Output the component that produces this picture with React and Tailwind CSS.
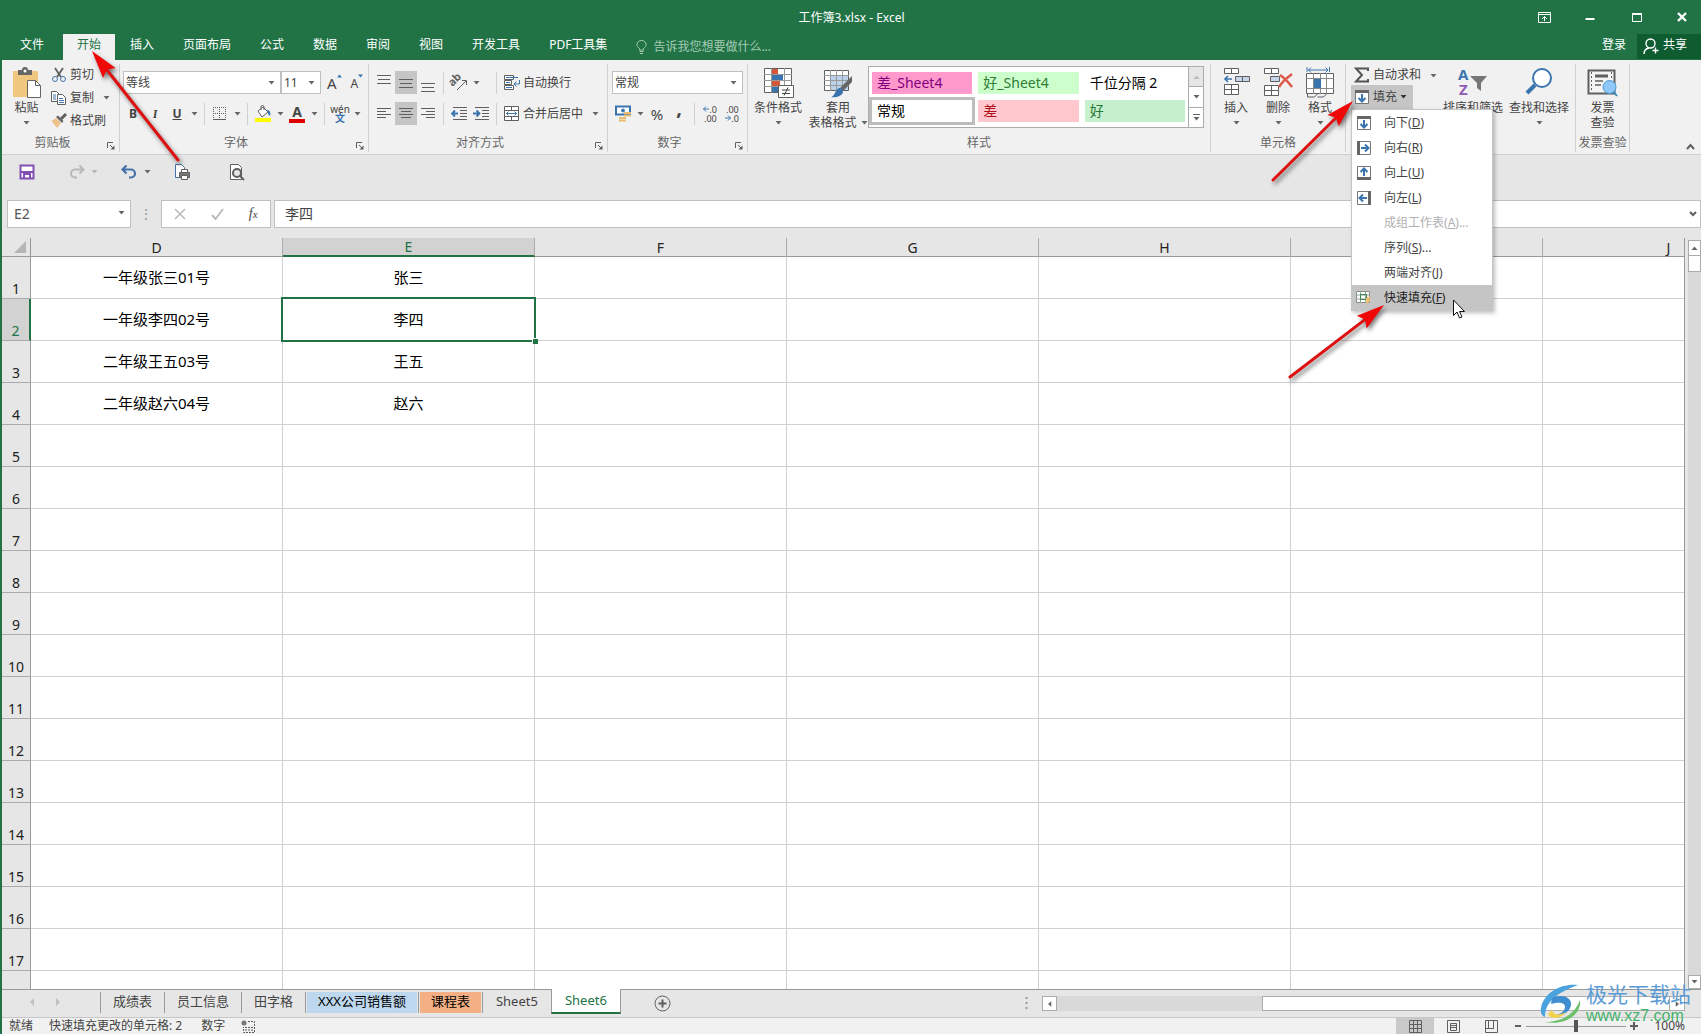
import { useState } from 'react'

const menuTabs = ['开始', '插入', '页面布局', '公式', '数据', '审阅', '视图', '开发工具', 'PDF工具集']

const columns = ['D', 'E', 'F', 'G', 'H', 'I', 'J']

const cells = {
  D1: '一年级张三01号',
  D2: '一年级李四02号',
  D3: '二年级王五03号',
  D4: '二年级赵六04号',
  E1: '张三',
  E2: '李四',
  E3: '王五',
  E4: '赵六',
}

const rows = Array.from({ length: 17 }, (_, i) => i + 1)

const styleCells = [
  { name: '差_Sheet4', className: 'bg-[#ff99cc] text-[#800080]' },
  { name: '好_Sheet4', className: 'bg-[#ccffcc] text-[#2f7d32]' },
  { name: '千位分隔 2', className: 'bg-white text-black' },
  { name: '常规', className: 'bg-white text-black outline-3 outline-[#bdbdbd]' },
  { name: '差', className: 'bg-[#ffc7ce] text-[#b0101c]' },
  { name: '好', className: 'bg-[#c6efce] text-[#2a7a35]' },
]

const fillItems = [
  { label: '向下', hotkey: 'D', icon: 'down' },
  { label: '向右', hotkey: 'R', icon: 'right' },
  { label: '向上', hotkey: 'U', icon: 'up' },
  { label: '向左', hotkey: 'L', icon: 'left' },
  { label: '成组工作表', hotkey: 'A', more: '...', disabled: true },
  { label: '序列', hotkey: 'S', more: '...' },
  { label: '两端对齐', hotkey: 'J' },
  { label: '快速填充', hotkey: 'F', icon: 'flash', active: true },
]

function Caret({ className = 'text-[#666]' }) {
  return (
    <svg className={`w-[7px] h-1 shrink-0 ${className}`} viewBox="0 0 7 4" fill="currentColor">
      <path d="M0.5 0h6L3.5 3.5z" />
    </svg>
  )
}

function Icon({ children, w = 16, h = 16, className = '' }) {
  return (
    <svg className={`shrink-0 overflow-visible ${className}`} width={w} height={h} viewBox={`0 0 ${w} ${h}`} fill="none" stroke="#5f5f5f">
      {children}
    </svg>
  )
}

function Sep() {
  return <span className="w-px h-[22px] mx-1 bg-[#d0d0d0]" />
}

function Tool({ label, active, children }) {
  return (
    <button aria-label={label} className={`w-[22px] h-[23px] flex items-center justify-center ${active ? 'bg-[#c5c5c5]' : ''}`}>
      {children}
    </button>
  )
}

function Drop({ label }) {
  return (
    <button aria-label={label} className="w-3 h-[23px] flex items-center justify-center">
      <Caret />
    </button>
  )
}

function Group({ title, width, launcher, children }) {
  return (
    <section className={`relative shrink-0 flex flex-col border-r border-[#d0d0d0] ${width}`}>
      <div className="h-[70px] flex">{children}</div>
      <h2 className={`h-[18px] text-center leading-[18px] text-[#666] ${launcher ? 'pr-4' : ''}`}>{title}</h2>
      {launcher && (
        <button aria-label={`${title}设置`} className="absolute right-1 bottom-0.5">
          <Icon w={8} h={8}>
            <path d="M0.5 6V0.5H6M3 3l3.5 3.5" />
            <path d="M7.5 3.5v4h-4z" fill="#5f5f5f" stroke="none" />
          </Icon>
        </button>
      )}
    </section>
  )
}

function BigButton({ icon, lines, width, caret }) {
  return (
    <button className={`flex flex-col items-center shrink-0 whitespace-nowrap leading-[15px] pt-1 ${width}`}>
      <span className="h-8 flex items-start">{icon}</span>
      {lines.map((l, i) => (
        <span key={l} className="flex items-center gap-1">
          {l}
          {caret && i > 0 && <Caret />}
        </span>
      ))}
      {caret && lines.length === 1 && <Caret className="mt-1.5 text-[#666]" />}
    </button>
  )
}

function Combo({ label, value, width }) {
  return (
    <div className={`relative h-[23px] shrink-0 ${width}`}>
      <select aria-label={label} defaultValue={value} className="appearance-none w-full h-full bg-white border border-[#c0c0c0] pl-0.5 outline-none text-[#444]">
        <option>{value}</option>
      </select>
      <Caret className="absolute right-1.5 top-[10px] pointer-events-none text-[#666]" />
    </div>
  )
}

function Lines({ rows }) {
  return (
    <Icon w={14} h={16}>
      {rows.map(([y, x, w]) => <path key={y} d={`M${x} ${y}.5h${w}`} />)}
    </Icon>
  )
}

// Small sheet icon with an arrow, one for each fill direction
function FillIcon({ dir }) {
  if (dir === 'flash') {
    return (
      <Icon>
        <path d="M0.5 1.5h13v11H0.5z" fill="#fff" stroke="#8a8a8a" />
        <path d="M0 5h14M0 9h14M4.5 1v12M9.5 1v12" stroke="#8aa890" />
        <path d="M4.5 4.5h6v5h-6z" stroke="#3c8257" />
        <path d="M11 7h4l-2 3h2l-5 5 1-4h-2z" fill="#f0c070" stroke="none" />
      </Icon>
    )
  }
  const turn = { down: 0, left: 90, up: 180, right: 270 }[dir]
  return (
    <Icon>
      <g transform={`rotate(${turn} 8 8)`}>
        <path d="M1.5 1.5h13v13h-13z" fill="#fff" stroke="#777" />
        <path d="M1 1h14v3H1z" fill="#666" stroke="none" />
        <path d="M8 5v7M4.5 9L8 12.5 11.5 9" stroke="#3a74ae" strokeWidth="2" />
      </g>
    </Icon>
  )
}

function FillMenu() {
  return (
    <ul role="menu" className="absolute z-20 left-0 top-6 w-[142px] bg-white border border-[#c6c6c6] shadow-[2px_2px_4px_rgba(0,0,0,0.25)]">
      {fillItems.map((item) => (
        <li key={item.hotkey} role="none">
          <button
            role="menuitem"
            disabled={item.disabled}
            className={`w-full h-[25px] flex items-center text-left pl-1 ${item.active ? 'bg-[#c5c5c5] text-[#222]' : ''} ${item.disabled ? 'text-[#b0b0b0]' : ''}`}
          >
            <span className="w-7 shrink-0">{item.icon && <FillIcon dir={item.icon} />}</span>
            <span>{item.label}(<u>{item.hotkey}</u>){item.more}</span>
          </button>
        </li>
      ))}
    </ul>
  )
}

function TitleBar() {
  return (
    <header className="h-[34px] shrink-0 flex items-center text-white">
      <div className="flex-1 pl-3.5" />
      <h1 className="pt-0.5">工作簿3.xlsx - Excel</h1>
      <div className="flex-1 flex justify-end items-center gap-[33px] pr-3.5">
        <button aria-label="功能区显示选项">
          <Icon w={13} h={11}>
            <g stroke="#fff"><path d="M0.5 0.5h12v10H0.5zM0 2.5h13M6.5 9V4.5M4 7l2.5-2.5L9 7" /></g>
          </Icon>
        </button>
        <button aria-label="最小化" className="pl-px">
          <Icon w={10} h={10}><path d="M0.5 7h9" stroke="#fff" strokeWidth="2" /></Icon>
        </button>
        <button aria-label="最大化" className="pl-1">
          <Icon w={10} h={10}><path d="M0.5 1v8.5h9V1M0 1.5h10" stroke="#fff" /><path d="M0 1h10v2H0z" fill="#fff" stroke="none" /></Icon>
        </button>
        <button aria-label="关闭" className="pl-0.5">
          <Icon w={10} h={10}><path d="M1 1l8 8M9 1L1 9" stroke="#fff" strokeWidth="2.4" /></Icon>
        </button>
      </div>
    </header>
  )
}

function MenuTabs() {
  const [current, setCurrent] = useState('开始')
  return (
    <nav className="h-[26px] shrink-0 flex items-stretch gap-px text-white">
      <button className="w-[60px] pb-1 leading-[22px]">文件</button>
      {menuTabs.map((t) => (
        <button
          key={t}
          onClick={() => setCurrent(t)}
          className={`px-3.5 pb-1 leading-[22px] whitespace-nowrap ${current === t ? 'bg-[#f1f1f1] text-[#217346]' : ''}`}
        >
          {t}
        </button>
      ))}
      <label className="flex items-center gap-1.5 pl-3.5 pb-1 pt-1">
        <Icon w={11} h={14}>
          <path d="M3.5 10V8.5C1.5 7 1 6 1 4.500a4.500 4 0 0 1 9 0C10 6 9.500 7 7.500 8.500V10zM3.500 11.500h4M4 13.500h3" stroke="#a3cbb3" />
        </Icon>
        <input aria-label="告诉我您想要做什么" placeholder="告诉我您想要做什么..." className="w-40 bg-transparent outline-none placeholder:text-[#a3cbb3]" />
      </label>
      <div className="flex-1" />
      <button className="px-2.5 pb-1 leading-[22px]">登录</button>
      <button className="w-16 h-[25px] bg-[#0e5c2f] flex items-center gap-1 pl-1.5 leading-4">
        <Icon w={16} h={17}>
          <g stroke="#fff" strokeWidth="1.4">
            <circle cx="7.500" cy="5.500" r="4.500" />
            <path d="M1 16c0-4 2.500-5.500 5-6M12.500 9.500v6M9.500 12.500h6" />
          </g>
        </Icon>
        <span className="pb-1">共享</span>
      </button>
    </nav>
  )
}

function ClipboardGroup() {
  return (
    <Group title="剪贴板" width="w-[118px]" launcher>
      <BigButton
        lines={['粘贴']}
        width="w-[49px]"
        caret
        icon={
          <Icon w={30} h={31}>
            <path d="M1 3h25v26H1z" fill="#efc77e" stroke="none" />
            <path d="M6 2h4a3 3 0 0 1 6 0h4v5H6z" fill="#666" stroke="none" />
            <circle cx="13" cy="3" r="1.500" fill="#fff" stroke="none" />
            <path d="M15.500 12.500h8l5 5v12h-13z" fill="#fff" stroke="#666" />
            <path d="M23.500 12.500v5h5" />
          </Icon>
        }
      />
      <div className="flex flex-col">
        <button className="h-[22px] flex items-center gap-[3px]">
          <Icon>
            <path d="M4 1l6 9M12 1L6 10" strokeWidth="1.800" />
            <circle cx="4" cy="12" r="2.500" stroke="#4472a8" />
            <circle cx="12" cy="12" r="2.500" stroke="#4472a8" />
          </Icon>
          剪切
        </button>
        <div className="flex items-center">
          <button className="h-[23px] flex items-center gap-[3px]">
            <Icon>
              <path d="M0.500 1.500h5l3 3v7h-8z" fill="#fff" />
              <path d="M2 5h3M2 7h3M2 9h3" stroke="#4472a8" />
              <path d="M6.500 4.500h5l3 3v7h-8z" fill="#fff" />
              <path d="M8 8.500h4M8 10.500h5M8 12.500h5" stroke="#4472a8" />
            </Icon>
            复制
          </button>
          <span className="pl-1.5 flex"><Drop label="复制选项" /></span>
        </div>
        <button className="h-[23px] flex items-center gap-[3px]">
          <Icon>
            <path d="M0.500 8L5 5l5 5-4 5z" fill="#efc28a" stroke="none" />
            <path d="M5 4l2-1.500L12.500 8 11 10z" fill="#666" stroke="none" />
            <path d="M10 6l5-5" strokeWidth="3" />
          </Icon>
          格式刷
        </button>
      </div>
    </Group>
  )
}

function FontGroup() {
  return (
    <Group title="字体" width="w-[249px]" launcher>
      <div className="flex flex-col gap-2 pt-[7px]">
        <div className="flex items-center pl-[3px]">
          <Combo label="字体" value="等线" width="w-[158px]" />
          <Combo label="字号" value="11" width="w-[40px]" />
          <button aria-label="增大字号" className="pl-1.5 flex text-[15px] leading-5">
            A<Icon w={6} h={5} className="mt-px"><path d="M0 3.500h5L2.500 0.500z" fill="#3a74ae" stroke="none" /></Icon>
          </button>
          <button aria-label="减小字号" className="pl-2 pt-0.5 flex text-xs leading-5">
            A<Icon w={6} h={5}><path d="M0 0.500h5L2.500 3.500z" fill="#3a74ae" stroke="none" /></Icon>
          </button>
        </div>
        <div className="flex items-center pl-0.5">
          <Tool label="加粗"><b>B</b></Tool>
          <Tool label="倾斜"><i className="font-serif font-bold">I</i></Tool>
          <Tool label="下划线"><u className="font-bold">U</u></Tool>
          <Drop label="下划线选项" />
          <Sep />
          <Tool label="边框">
            <Icon w={14} h={14}>
              <path d="M0.500 0v13M6.500 0v13M12.500 0v13M0 0.500h13M0 6.500h13" strokeDasharray="1 1" />
              <path d="M0 12.500h13" />
            </Icon>
          </Tool>
          <Drop label="边框选项" />
          <Sep />
          <Tool label="填充颜色">
            <Icon w={16} h={17}>
              <path d="M3 6l5-4 5 5-6 5z" fill="#fff" />
              <path d="M6 5V2a1.500 1.500 0 0 1 3 0v3" />
              <path d="M12 5c3 0 4 3 3 6-2-1-2-3-3-6z" fill="#3a74ae" stroke="none" />
              <path d="M0 13h16v4H0z" fill="#ffff00" stroke="none" />
            </Icon>
          </Tool>
          <Drop label="填充颜色选项" />
          <Tool label="字体颜色">
            <span className="w-4 border-b-4 border-[#e00000] text-sm leading-[14px] font-bold">A</span>
          </Tool>
          <Drop label="字体颜色选项" />
          <Sep />
          <Tool label="拼音">
            <span className="flex flex-col items-center text-[10px] leading-[9px]">
              wén<span className="text-[#3a74ae] font-bold">文</span>
            </span>
          </Tool>
          <Drop label="拼音选项" />
        </div>
      </div>
    </Group>
  )
}

function AlignGroup() {
  return (
    <Group title="对齐方式" width="w-[239px]" launcher>
      <div className="flex flex-col gap-2 pt-[7px] pl-1">
        <div className="flex items-center">
          <Tool label="顶端对齐"><Lines rows={[[0, 0, 14], [4, 1, 12], [8, 0, 14]]} /></Tool>
          <Tool label="垂直居中" active><Lines rows={[[4, 0, 14], [8, 1, 12], [12, 0, 14]]} /></Tool>
          <Tool label="底端对齐"><Lines rows={[[8, 0, 14], [12, 1, 12], [16, 0, 14]]} /></Tool>
          <Sep />
          <div className="w-11 flex">
            <Tool label="方向">
              <Icon w={17} h={17}>
                <text x="-1" y="9" transform="rotate(-45 5 8)" fontSize="11" fontWeight="bold" fill="#5f5f5f" stroke="none">ab</text>
                <path d="M6 16l9-9M11 6.500h4.500V11" />
              </Icon>
            </Tool>
            <Drop label="方向选项" />
          </div>
          <Sep />
          <button className="h-[23px] flex items-center gap-[3px] pl-[3px]">
            <Icon>
              <path d="M0.500 0.500h9v4h-9zM0.500 5.500h7v4h-7zM0.500 10.500h9v4h-9z" fill="#fff" />
              <path d="M2 2.500h12M2 7.500h4M2 12.500h6M15.500 5v4h-5M12.500 6.500l-2.500 2.500 2.500 2.500" stroke="#3a74ae" />
            </Icon>
            自动换行
          </button>
        </div>
        <div className="flex items-center">
          <Tool label="左对齐"><Lines rows={[[2, 0, 14], [5, 0, 9], [8, 0, 14], [11, 0, 9]]} /></Tool>
          <Tool label="居中" active><Lines rows={[[2, 0, 14], [5, 2, 10], [8, 0, 14], [11, 2, 10]]} /></Tool>
          <Tool label="右对齐"><Lines rows={[[2, 0, 14], [5, 5, 9], [8, 0, 14], [11, 5, 9]]} /></Tool>
          <Sep />
          <Tool label="减少缩进量">
            <Icon><path d="M2 1.500h14M9 4.500h7M9 7.500h7M9 10.500h7M2 13.500h14" /><path d="M1 7.500h6M4 4.500l-3 3 3 3" stroke="#3a74ae" strokeWidth="1.800" /></Icon>
          </Tool>
          <Tool label="增加缩进量">
            <Icon><path d="M2 1.500h14M9 4.500h7M9 7.500h7M9 10.500h7M2 13.500h14" /><path d="M0 7.500h6M3.500 4.500l3 3-3 3" stroke="#3a74ae" strokeWidth="1.800" /></Icon>
          </Tool>
          <Sep />
          <button className="h-[23px] flex items-center gap-[3px] pl-[3px]">
            <Icon>
              <path d="M0.500 0.500h14v14H0.500zM0 4.500h15M0 10.500h15M7.500 0v4M7.500 11v4" fill="#fff" />
              <path d="M2.500 7.500h10M4.500 5.500l-2 2 2 2M10.500 5.500l2 2-2 2" stroke="#3a74ae" />
            </Icon>
            合并后居中
          </button>
          <span className="pl-1.5 flex"><Drop label="合并选项" /></span>
        </div>
      </div>
    </Group>
  )
}

function NumberGroup() {
  return (
    <Group title="数字" width="w-[140px]" launcher>
      <div className="flex flex-col gap-2 pt-[7px] pl-1">
        <Combo label="数字格式" value="常规" width="w-[131px]" />
        <div className="flex items-center">
          <Tool label="会计数字格式">
            <Icon w={17} h={17}>
              <path d="M1 1.500h14v8H1z" fill="#fff" stroke="#3a74ae" strokeWidth="2" />
              <circle cx="8" cy="5.500" r="1.500" fill="#3a74ae" stroke="#3a74ae" />
              <path d="M9 8h7M9 10.500h7M4 13h7M4 15.500h7" stroke="#e8bd72" strokeWidth="2" />
            </Icon>
          </Tool>
          <Drop label="会计格式选项" />
          <Tool label="百分比"><span className="text-[15px]">%</span></Tool>
          <Tool label="千位分隔"><span className="text-xl leading-4 pb-3 font-bold">,</span></Tool>
          <Sep />
          <Tool label="增加小数位数">
            <span className="flex flex-col text-[9px] leading-[9px] text-right">
              <span className="flex items-center"><Icon w={6} h={6}><path d="M0.500 3H6M3 0.500L0.500 3 3 5.500" stroke="#3a74ae" /></Icon>.0</span>
              <span>.00</span>
            </span>
          </Tool>
          <Tool label="减少小数位数">
            <span className="flex flex-col text-[9px] leading-[9px] text-right">
              <span>.00</span>
              <span className="flex items-center"><Icon w={6} h={6}><path d="M0 3h5.500M3 0.500L5.500 3 3 5.500" stroke="#3a74ae" /></Icon>.0</span>
            </span>
          </Tool>
        </div>
      </div>
    </Group>
  )
}

function StylesGroup() {
  return (
    <Group title="样式" width="w-[463px]">
      <BigButton
        lines={['条件格式']}
        width="w-[60px]"
        caret
        icon={
          <Icon w={31} h={31}>
            <path d="M1.500 0.500h27v24h-27z" fill="#fff" />
            <path d="M9 1h6v5H9zM9 13h8v5H9z" fill="#d6583c" stroke="none" />
            <path d="M9 7h11v5H9zM9 19h6v5H9z" fill="#3a74ae" stroke="none" />
            <path d="M1 6.500h28M1 12.500h28M1 18.500h28M8.500 0v25M21.500 0v25" stroke="#999" />
            <path d="M15.500 17.500h15v12h-15z" fill="#fff" />
            <path d="M19 22h8M19 25.500h8M25 19.500l-4 8" stroke="#444" />
          </Icon>
        }
      />
      <BigButton
        lines={['套用', '表格格式']}
        width="w-[60px]"
        caret
        icon={
          <Icon w={30} h={31}>
            <path d="M1.500 2.500h24v20h-24z" fill="#fff" />
            <path d="M7 8h18v14H7z" fill="#bcd2ea" stroke="none" />
            <path d="M1 7.500h25M1 12.500h25M1 17.500h25M7.500 2v21M13.500 2v21M19.500 2v21" stroke="#999" />
            <path d="M29 8v6l-9 9-3-3z" fill="#666" stroke="none" />
            <path d="M16 20c3 0 4 2 4 5-3 4-8 5-12 4 4-1 4-7 8-9z" fill="#3a74ae" stroke="none" />
          </Icon>
        }
      />
      <div className="mt-0.5 h-[62px] border border-[#ababab] bg-white flex">
        <div className="grid grid-cols-3 gap-1.5 w-[319px] px-[3px] py-[5px]">
          {styleCells.map((s) => (
            <button key={s.name} className={`text-left text-sm pl-[5px] leading-[20px] ${s.className}`}>
              {s.name}
            </button>
          ))}
        </div>
        <div className="w-[15px] flex flex-col border-l border-[#ababab] divide-y divide-[#ababab]">
          <button aria-label="上一行" className="flex-1 bg-[#e6e6e6] flex items-center justify-center"><Caret className="rotate-180 text-[#bbb]" /></button>
          <button aria-label="下一行" className="flex-1 flex items-center justify-center"><Caret /></button>
          <button aria-label="其他样式" className="flex-1 flex flex-col gap-0.5 items-center justify-center">
            <span className="w-[7px] h-px bg-[#666]" />
            <Caret />
          </button>
        </div>
      </div>
    </Group>
  )
}

function CellsGroup() {
  return (
    <Group title="单元格" width="w-[135px]">
      <span className="w-1" />
      <BigButton
        lines={['插入']}
        width="w-[42px]"
        caret
        icon={
          <Icon w={27} h={28}>
            <path d="M1.500 0.500h14v5h-14zM8.500 0v6M1.500 16.500h14v10h-14zM1 21.500h15M8.500 16v11" fill="#fff" />
            <path d="M12.500 8.500h14v5h-14zM19.500 8v6" fill="#c5d6ea" />
            <path d="M2 11h7M5 8l-3 3 3 3" stroke="#3a74ae" strokeWidth="1.600" />
          </Icon>
        }
      />
      <BigButton
        lines={['删除']}
        width="w-[42px]"
        caret
        icon={
          <Icon w={29} h={28}>
            <path d="M0.500 0.500h14v5h-14zM7.500 0v6M0.500 17.500h14v10h-14zM0 22.500h15M7.500 17v11" fill="#fff" />
            <path d="M6.500 8.500h9v5h-9z" fill="#c5d6ea" />
            <path d="M16 7c3 2 9 8 12 12M28 6C24 9 18 14 15 19" stroke="#dc5a4a" strokeWidth="2.500" />
          </Icon>
        }
      />
      <BigButton
        lines={['格式']}
        width="w-[42px]"
        caret
        icon={
          <Icon w={28} h={31}>
            <path d="M1 -1v5M23.500 -1v5M2 2h20M5 -0.500L2.500 2 5 4.500M19.500 -0.500L22 2l-2.500 2.500" stroke="#3a74ae" />
            <path d="M0.500 5.500h27v20h-27z" fill="#fff" />
            <path d="M0 10.500h28M0 20.500h28M7.500 5v21M14.500 5v5M14.500 21v5M20.500 5v21" stroke="#888" />
            <path d="M8 11h7v9H8z" fill="#3a74ae" stroke="none" />
            <path d="M1.500 26v3h7l3-3M11.500 29h6l3-3" />
          </Icon>
        }
      />
    </Group>
  )
}

function EditGroup() {
  return (
    <Group title="" width="w-[230px]">
      <div className="w-[92px] shrink-0 pl-[5px]">
        <div className="flex items-center">
          <button className="h-[21px] flex items-center gap-[3px] pl-[3px] whitespace-nowrap">
            <Icon><path d="M14 4V1.500H2L8 8l-6 6.500h12V12" stroke="#555" strokeWidth="2" /></Icon>
            自动求和
          </button>
          <span className="pl-1.5 flex h-[21px]"><Drop label="求和选项" /></span>
        </div>
        <div className="relative w-[62px]">
          <button aria-expanded="true" className="w-full h-6 bg-[#c5c5c5] flex items-center gap-[3px] pl-[3px]">
            <FillIcon dir="down" />
            填充
            <Caret className="text-[#333]" />
          </button>
          <FillMenu />
        </div>
      </div>
      <BigButton
        lines={['排序和筛选']}
        width="w-[70px]"
        icon={
          <Icon w={30} h={30}>
            <text x="0" y="12" fontSize="15" fontWeight="bold" fill="#3a74ae" stroke="none">A</text>
            <text x="1" y="27" fontSize="15" fontWeight="bold" fill="#8f5bb5" stroke="none">Z</text>
            <path d="M12 8h17l-6 7v8l-4-3v-5z" fill="#777" stroke="none" />
          </Icon>
        }
      />
      <BigButton
        lines={['查找和选择']}
        width="w-[62px]"
        caret
        icon={
          <Icon w={28} h={28}>
            <path d="M10 17l-8 8" stroke="#3a74ae" strokeWidth="4" />
            <circle cx="17" cy="10" r="9" fill="#fff" stroke="#3a74ae" strokeWidth="2" />
          </Icon>
        }
      />
    </Group>
  )
}

function InvoiceGroup() {
  return (
    <Group title="发票查验" width="w-[54px]">
      <BigButton
        lines={['发票', '查验']}
        width="w-[53px]"
        icon={
          <Icon w={31} h={29}>
            <path d="M1.500 2.500h26v23h-26z" fill="#f4f4f4" strokeWidth="2" />
            <path d="M4.500 4v20M24.500 4v8" strokeDasharray="2 2" />
            <path d="M8 8h13" strokeWidth="3" />
            <path d="M8 13h8M8 17h6" strokeWidth="1.600" />
            <path d="M26 23l4 5" stroke="#3a8ac0" strokeWidth="2" />
            <circle cx="22.500" cy="19" r="6.500" fill="#8fc8f8" stroke="#4a9ad0" />
          </Icon>
        }
      />
    </Group>
  )
}

function Ribbon() {
  return (
    <div className="h-[95px] shrink-0 flex bg-[#f1f1f1] border-b border-[#d0d0d0] pt-1 pb-0.5">
      <ClipboardGroup />
      <FontGroup />
      <AlignGroup />
      <NumberGroup />
      <StylesGroup />
      <CellsGroup />
      <EditGroup />
      <InvoiceGroup />
      <div className="flex-1 flex justify-end items-end pr-1.5 pb-0.5">
        <button aria-label="折叠功能区"><Icon w={9} h={7}><path d="M1 6l3.500-4L8 6" strokeWidth="2" /></Icon></button>
      </div>
    </div>
  )
}

function QuickAccess() {
  return (
    <div className="h-[45px] shrink-0 flex items-start pt-[9px] pl-[17px]">
      <button aria-label="保存" className="w-[50px]">
        <Icon>
          <path d="M1.500 1.500h13v13h-13z" fill="#fff" stroke="#8250b0" strokeWidth="2" />
          <path d="M1 8h14M5 15v-5h6v5" stroke="#8250b0" strokeWidth="2" />
        </Icon>
      </button>
      <button aria-label="恢复" className="w-[22px]">
        <Icon><path d="M14 5.500H6a4 4 0 0 0 0 8h2M10.500 1.500l4 4-4 4" stroke="#b8b8b8" strokeWidth="2" /></Icon>
      </button>
      <span className="w-[30px] pt-1.5"><Caret className="text-[#b8b8b8]" /></span>
      <button aria-label="撤消" className="w-[23px]">
        <Icon><path d="M2 5.500h8a4 4 0 0 1 0 8H8M5.500 1.500l-4 4 4 4" stroke="#4472a8" strokeWidth="2.200" /></Icon>
      </button>
      <button aria-label="撤消选项" className="w-[30px] pt-1.5 flex"><Caret /></button>
      <button aria-label="快速打印" className="w-[54px]">
        <Icon w={17} h={17}>
          <path d="M5 13.500H1.500v-13h6l3 3V6" fill="#fff" stroke="#4472a8" />
          <path d="M5.500 8.500h10v5h-10z" fill="#777" />
          <path d="M7.500 5.500h6v3h-6zM7.500 11.500h6v4h-6z" fill="#fff" />
        </Icon>
      </button>
      <button aria-label="打印预览">
        <Icon w={17} h={17}>
          <path d="M2.500 0.500h8l3 3v12h-11z" fill="#fff" />
          <circle cx="9" cy="9" r="4" fill="#e6e6e6" strokeWidth="2" />
          <path d="M12 12l4 4" strokeWidth="2" />
        </Icon>
      </button>
    </div>
  )
}

function FormulaBar() {
  return (
    <div className="h-7 shrink-0 flex items-stretch pl-[5px] mb-2.5 text-sm">
      <div className="relative w-[124px]">
        <input aria-label="名称框" defaultValue="E2" className="w-full h-full bg-white border border-[#c0c0c0] pl-1.5 pb-0.5 outline-none text-[#555]" />
        <Caret className="absolute right-1.5 top-[11px] text-[#666]" />
      </div>
      <span className="w-[30px] flex items-center justify-center text-[#999]">⋮</span>
      <div className="w-[110px] bg-white border border-[#c0c0c0] flex items-center justify-around">
        <button aria-label="取消"><Icon w={12} h={12}><path d="M1 1l10 10M11 1L1 11" stroke="#bbb" strokeWidth="1.600" /></Icon></button>
        <button aria-label="输入"><Icon w={13} h={12}><path d="M1 7l3.500 4L12 1" stroke="#bbb" strokeWidth="2" /></Icon></button>
        <button aria-label="插入函数" className="font-['Liberation_Serif'] italic leading-4">f<span className="text-[11px]">x</span></button>
      </div>
      <div className="relative flex-1 ml-[3px]">
        <input aria-label="编辑栏" defaultValue="李四" className="w-full h-full bg-white border border-[#c0c0c0] pl-2.5 pb-0.5 outline-none" />
        <Icon w={8} h={6} className="absolute right-1 top-[11px]"><path d="M1 1l3 3 3-3" strokeWidth="2" /></Icon>
      </div>
    </div>
  )
}

function Grid() {
  return (
    <div className="flex-1 min-h-0 flex">
      <div className="flex-1 min-w-0 overflow-hidden border-r border-[#999] bg-white">
        <table className="table-fixed border-separate border-spacing-0 w-[1793px] text-[15px] text-black">
          <thead>
            <tr className="h-[19px]">
              <th className="w-[29px] p-0 bg-[#e6e6e6] border-r border-b border-[#999]">
                <Icon w={12} h={12} className="ml-auto mr-1"><path d="M12 0v12H0z" fill="#b5b5b5" stroke="none" /></Icon>
              </th>
              {columns.map((c) => (
                <th
                  key={c}
                  scope="col"
                  className={`w-[252px] p-0 font-normal leading-4 text-sm align-bottom ${c === 'E' ? 'bg-[#d2d2d2] text-[#217346] border-b-2 border-b-[#217346] border-r border-r-[#ababab]' : 'bg-[#e6e6e6] text-[#222] border-b border-r border-b-[#999] border-r-[#ababab]'}`}
                >
                  {c}
                </th>
              ))}
            </tr>
          </thead>
          <tbody>
            {rows.map((r) => (
              <tr key={r} className="h-[42px]">
                <th
                  scope="row"
                  className={`p-0 font-normal text-sm align-bottom leading-[18px] ${r === 2 ? 'bg-[#d2d2d2] text-[#217346] border-b border-b-[#ababab] border-r-2 border-r-[#217346]' : 'bg-[#e6e6e6] text-[#222] border-b border-r border-b-[#ababab] border-r-[#999]'}`}
                >
                  {r}
                </th>
                {columns.map((c) => (
                  <td key={c} className={`relative p-0 pb-0.5 text-center border-r border-b border-[#d0d0d0] ${c + r === 'E2' ? 'z-10' : ''}`}>
                    {cells[c + r]}
                    {c + r === 'E2' && (
                      <span className="absolute -inset-0.5 border-2 border-[#217346]">
                        <span className="absolute -right-1 -bottom-1 size-1.5 bg-[#217346] border-t border-l border-white" />
                      </span>
                    )}
                  </td>
                ))}
              </tr>
            ))}
            <tr className="h-[42px]">
              <th className="p-0 bg-[#e6e6e6] border-r border-[#999]" />
              {columns.map((c) => <td key={c} className="p-0 border-r border-[#d0d0d0]" />)}
            </tr>
          </tbody>
        </table>
      </div>
      <div className="w-4 flex flex-col pl-[3px] pt-0.5">
        <button aria-label="向上滚动" className="h-4 bg-white border border-[#ababab] flex items-center justify-center"><Caret className="rotate-180 text-[#666]" /></button>
        <div className="flex-1 bg-[#d9d9d9]"><div className="h-4 bg-white border border-t-0 border-[#ababab]" /></div>
        <button aria-label="向下滚动" className="h-3.5 bg-white border border-[#ababab] flex items-center justify-center"><Caret /></button>
      </div>
    </div>
  )
}

function SheetTabs() {
  return (
    <div className="h-[29px] shrink-0 flex border-t border-[#999] border-b border-b-[#c6c6c6] text-[13px] leading-[18px] whitespace-nowrap">
      <div className="w-[98px] flex items-center gap-5 pl-[27px] pb-1">
        <Icon w={6} h={8}><path d="M5 0v8L1 4z" fill="#c0c0c0" stroke="none" /></Icon>
        <Icon w={6} h={8}><path d="M1 0v8l4-4z" fill="#c0c0c0" stroke="none" /></Icon>
      </div>
      {['成绩表', '员工信息', '田字格'].map((t) => (
        <button key={t} className="h-[21px] mt-0.5 px-3 pb-1 border-l border-[#999]">{t}</button>
      ))}
      <button className="h-[21px] mt-0.5 px-px border-l border-[#999] text-black">
        <span className="block h-full px-[11px] bg-[#bdd7ee]">XXX公司销售额</span>
      </button>
      <button className="h-[21px] mt-0.5 px-px border-l border-[#999] text-black">
        <span className="block h-full px-[11px] bg-[#f4b084]">课程表</span>
      </button>
      <button className="h-[21px] mt-0.5 px-[13px] pb-1 border-l border-[#999]">Sheet5</button>
      <button className="h-[25px] -mt-px px-[13px] pb-0.5 bg-white border-x border-[#999] border-b-2 border-b-[#217346] text-[#217346]">Sheet6</button>
      <button aria-label="新工作表" className="ml-[33px]">
        <Icon w={17} h={17}><circle cx="8.500" cy="8.500" r="7.500" /><path d="M8.500 4.500v8M4.500 8.500h8" strokeWidth="2" /></Icon>
      </button>
      <div className="flex-1" />
      <Icon w={3} h={13} className="mt-[7px] mr-3.5"><path d="M1.500 0v13" strokeDasharray="2 3" stroke="#999" strokeWidth="2" /></Icon>
      <div className="w-[643px] h-[15px] mt-1.5 mr-4 bg-[#d9d9d9] flex">
        <button aria-label="向左滚动" className="w-[15px] bg-white border border-[#ababab] flex items-center justify-center"><Caret className="rotate-90 text-[#666]" /></button>
        <div className="w-[205px]" />
        <div className="flex-1 bg-white border border-[#ababab]" />
        <button aria-label="向右滚动" className="w-[15px] bg-white border border-l-0 border-[#ababab] flex items-center justify-center"><Caret className="-rotate-90 text-[#666]" /></button>
      </div>
    </div>
  )
}

function StatusBar() {
  return (
    <footer className="h-4 shrink-0 flex items-center bg-[#f1f1f1] pl-[7px] pr-4 leading-4">
      <span className="w-10">就绪</span>
      <span className="mr-[19px]">快速填充更改的单元格: 2</span>
      <span className="mr-4">数字</span>
      <Icon w={14} h={13}><circle cx="3" cy="3" r="2.500" fill="#777" stroke="none" /><path d="M7 1.500h6.500v11h-11V7M4 7.500h8M4 10h8" strokeDasharray="2 1" /></Icon>
      <div className="flex-1" />
      <button aria-label="普通" className="w-[38px] h-4 bg-[#c9c9c9] flex items-center justify-center">
        <Icon w={13} h={13}><path d="M0.500 0.500h12v12H0.500zM0 4.500h13M0 8.500h13M4.500 0v13M8.500 0v13" /></Icon>
      </button>
      <button aria-label="页面布局" className="w-[38px] flex justify-center">
        <Icon w={13} h={13}><path d="M0.500 0.500h12v12H0.500zM3.500 3.500h6v7h-6zM4 5.500h5M4 7.500h5" /></Icon>
      </button>
      <button aria-label="分页预览" className="w-[38px] flex justify-center">
        <Icon w={13} h={13}><path d="M0.500 0.500h12v12H0.500zM3.500 1v7M8.500 1v7M1 8.500h8" /></Icon>
      </button>
      <button aria-label="缩小" className="pl-1"><Icon w={8} h={8}><path d="M1 4h6" strokeWidth="2" /></Icon></button>
      <input type="range" aria-label="显示比例" defaultValue="50" className="mx-1 w-[100px] h-4 appearance-none bg-transparent [&::-webkit-slider-runnable-track]:h-px [&::-webkit-slider-runnable-track]:bg-[#999] [&::-webkit-slider-thumb]:appearance-none [&::-webkit-slider-thumb]:w-1 [&::-webkit-slider-thumb]:h-3 [&::-webkit-slider-thumb]:-mt-1.5 [&::-webkit-slider-thumb]:bg-[#555]" />
      <button aria-label="放大"><Icon w={8} h={8}><path d="M0 4h8M4 0v8" strokeWidth="2" /></Icon></button>
      <span className="pl-4">100%</span>
    </footer>
  )
}

function Watermark() {
  return (
    <div className="absolute right-2.5 bottom-2 flex items-center gap-1 pointer-events-none">
      <svg className="w-[42px] h-10" viewBox="0 0 42 40">
        <path d="M38 1C22-1 4 8 1 24c-1 5 1 8 4 9 0-9 4-22 33-32z" fill="#4aa3dc" />
        <path d="M12 14c8-4 20-2 19 7-1 7-9 12-18 11 7-1 12-5 12-9 0-5-7-5-14-3z" fill="#3f8fd0" />
        <path d="M4 38c16 0 30-6 36-22 2 14-14 26-36 22z" fill="#6cc06a" />
        <path d="M12 26c1 5 8 6 14 2-4 7-16 8-18 2z" fill="#f3d24a" />
      </svg>
      <div className="flex flex-col">
        <span className="text-[21px] leading-6 text-[#5b9bd5]">极光下载站</span>
        <span className="text-base leading-5 text-[#45b26b] font-['Liberation_Sans']">www.xz7.com</span>
      </div>
    </div>
  )
}

function Arrow({ from, to }) {
  const len = Math.hypot(to[0] - from[0], to[1] - from[1])
  const ux = (to[0] - from[0]) / len
  const uy = (to[1] - from[1]) / len
  const bx = to[0] - ux * 28
  const by = to[1] - uy * 28
  return (
    <g>
      <path d={`M${from[0]} ${from[1]}L${bx + ux * 6} ${by + uy * 6}`} stroke="#dd1111" strokeWidth="3" strokeLinecap="round" />
      <path d={`M${to[0]} ${to[1]}L${bx - uy * 8} ${by + ux * 8}L${bx + ux * 4} ${by + uy * 4}L${bx + uy * 8} ${by - ux * 8}z`} fill="#f00808" />
    </g>
  )
}

function Annotations() {
  return (
    <svg className="absolute z-30 inset-0 w-full h-full pointer-events-none drop-shadow-[2px_3px_2px_rgba(0,0,0,0.5)]" fill="none">
      <Arrow from={[176, 160]} to={[90, 51]} />
      <Arrow from={[1271, 180]} to={[1351, 101]} />
      <Arrow from={[1288, 377]} to={[1382, 305]} />
    </svg>
  )
}

function Pointer() {
  return (
    <svg className="absolute z-30 left-[1451px] top-[299px] w-[13px] h-5 pointer-events-none" viewBox="0 0 13 20">
      <path d="M0.500 1v15.500l3.500-3.500 2.500 6 2.500-1-2.500-5.500h5z" fill="#fff" stroke="#111" />
    </svg>
  )
}

export default function App() {
  return (
    <div className="relative h-screen flex flex-col overflow-hidden bg-[#e6e6e6] border-l-2 border-[#217346] text-xs text-[#444] font-['Noto_Sans','Noto_Sans_CJK_SC',sans-serif]">
      <div className="shrink-0 bg-[#217346]">
        <TitleBar />
        <MenuTabs />
      </div>
      <Ribbon />
      <QuickAccess />
      <FormulaBar />
      <Grid />
      <SheetTabs />
      <StatusBar />
      <Watermark />
      <Annotations />
      <Pointer />
    </div>
  )
}
